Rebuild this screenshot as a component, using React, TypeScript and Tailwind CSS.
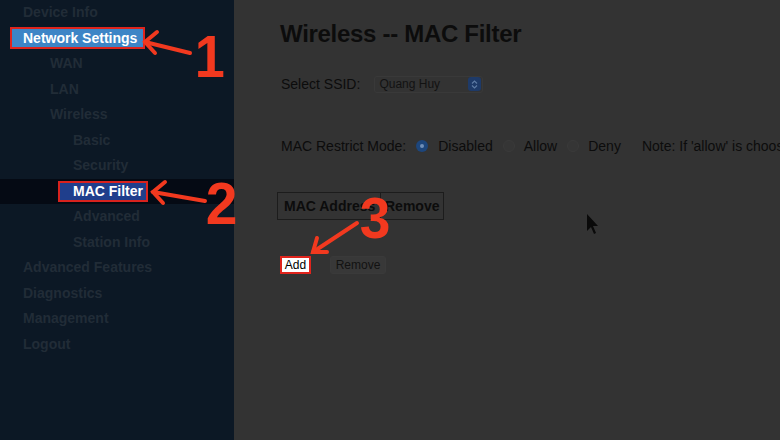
import React from "react";

const MENU: { label: string; indent: number; kind?: "boxed" | "active" }[] = [
  { label: "Device Info", indent: 23 },
  { label: "Network Settings", indent: 10, kind: "boxed" },
  { label: "WAN", indent: 50 },
  { label: "LAN", indent: 50 },
  { label: "Wireless", indent: 50 },
  { label: "Basic", indent: 73 },
  { label: "Security", indent: 73 },
  { label: "MAC Filter", indent: 58, kind: "active" },
  { label: "Advanced", indent: 73 },
  { label: "Station Info", indent: 73 },
  { label: "Advanced Features", indent: 23 },
  { label: "Diagnostics", indent: 23 },
  { label: "Management", indent: 23 },
  { label: "Logout", indent: 23 },
];

function Radio({ checked }: { checked?: boolean }) {
  return checked ? (
    <span className="block w-[12px] h-[12px] rounded-full bg-[#1d467c] flex items-center justify-center">
      <span className="block w-[4px] h-[4px] rounded-full bg-[#6f8fb8]" />
    </span>
  ) : (
    <span className="block w-[12px] h-[12px] rounded-full border border-[#3a3a3a] bg-[#353535]" />
  );
}

export default function App() {
  return (
    <div className="relative w-[780px] h-[440px] overflow-hidden flex font-['Liberation_Sans',Arial,sans-serif]">
      {/* Sidebar */}
      <aside className="w-[234px] h-full bg-[#0c1825] shrink-0">
        {MENU.map(({ label, indent, kind }) => (
          <div
            key={label}
            className={`h-[25.5px] flex items-center ${kind === "active" ? "bg-[#050a14]" : ""}`}
            style={{ paddingLeft: indent }}
          >
            {kind === "boxed" ? (
              <span className="h-[22px] flex items-center pl-[11px] pr-[6px] bg-[#3d85c6] border-2 border-[#e0241c] text-white text-[14px] font-bold">
                {label}
              </span>
            ) : kind === "active" ? (
              <span className="h-[21px] flex items-center pl-[13px] pr-[3px] bg-[#1f3e8c] border-2 border-[#d8221e] text-white text-[14px] font-bold">
                {label}
              </span>
            ) : (
              <span className="text-[14px] font-bold text-[#212c37]">{label}</span>
            )}
          </div>
        ))}
      </aside>

      {/* Main */}
      <main className="flex-1 h-full bg-[#333333] pl-[46px] flex flex-col items-start text-[#0c0c0c]">
        <h1 className="mt-[20px] text-[24px] leading-[28px] font-bold tracking-[-0.3px]">Wireless -- MAC Filter</h1>

        <div className="mt-[27px] h-[18px] flex items-center pl-[1px] text-[14px]">
          <span>Select SSID:</span>
          <div className="ml-[14px] w-[109px] h-[17px] rounded-[3px] border border-[#393939] flex items-center justify-between pl-[4px] pr-[1px]">
            <span className="text-[12px] text-[#121212]">Quang Huy</span>
            <span className="w-[13px] h-[14px] rounded-[3px] bg-[#1e3a68] flex items-center justify-center">
              <svg width="7" height="9" viewBox="0 0 7 9">
                <path d="M1 3.5 L3.5 1 L6 3.5 M1 5.5 L3.5 8 L6 5.5" stroke="#5d7aa3" strokeWidth="1.2" fill="none" />
              </svg>
            </span>
          </div>
        </div>

        <div className="mt-[44px] h-[18px] flex items-center pl-[1px] text-[14px] whitespace-nowrap">
          <span>MAC Restrict Mode:</span>
          <span className="ml-[10px]"><Radio checked /></span>
          <span className="ml-[10px]">Disabled</span>
          <span className="ml-[10px]"><Radio /></span>
          <span className="ml-[9px]">Allow</span>
          <span className="ml-[10px]"><Radio /></span>
          <span className="ml-[9px]">Deny</span>
          <span className="ml-[21px]">Note: If 'allow' is choosen, only the MAC addresses listed below can connect</span>
        </div>

        <table className="mt-[37px] -ml-[3px] border border-[#1c1c1c] border-separate border-spacing-0">
          <tbody>
            <tr className="h-[26px] text-[14px] font-bold">
              <td className="w-[103px] pl-[6px] border-r border-[#1c1c1c]">MAC Address</td>
              <td className="w-[62px] pl-[4px]">Remove</td>
            </tr>
          </tbody>
        </table>

        <div className="mt-[36px] flex items-center gap-[19px] text-[12px]">
          <span className="w-[31px] h-[18px] flex items-center justify-center bg-white border-2 border-[#e0241c] text-black">
            Add
          </span>
          <span className="w-[56px] h-[18px] flex items-center justify-center rounded-[3px] bg-[#383838] border border-[#3a3a3a] text-[#121212]">
            Remove
          </span>
        </div>
      </main>

      {/* Annotations */}
      <svg className="absolute inset-0 pointer-events-none" width="780" height="440" viewBox="0 0 780 440">
        <g stroke="#f2391f" strokeWidth="4" strokeLinecap="round" fill="none">
          <path d="M190 53 L145 42" />
          <path d="M157 32 L145 42 L155 53" />
          <path d="M205 201 L153 192" />
          <path d="M165 182 L153 192 L163 203" />
          <path d="M357 223 L313 252" />
          <path d="M317 238 L313 252 L327 252" />
        </g>
        <path d="M587 214 L587 231 L591 227 L594 234 L596 233 L593 226 L598 226 Z" fill="#0a0a0a" />
      </svg>
      <span className="absolute left-[193px] top-[22px] text-[60px] leading-[70px] font-bold text-[#f2391f] scale-x-[0.9]">1</span>
      <span className="absolute left-[205px] top-[169px] text-[60px] leading-[70px] font-bold text-[#f2391f] scale-x-[0.95]">2</span>
      <span className="absolute left-[359px] top-[185px] text-[58px] leading-[66px] font-bold text-[#f2391f] scale-x-[0.95]">3</span>
    </div>
  );
}
